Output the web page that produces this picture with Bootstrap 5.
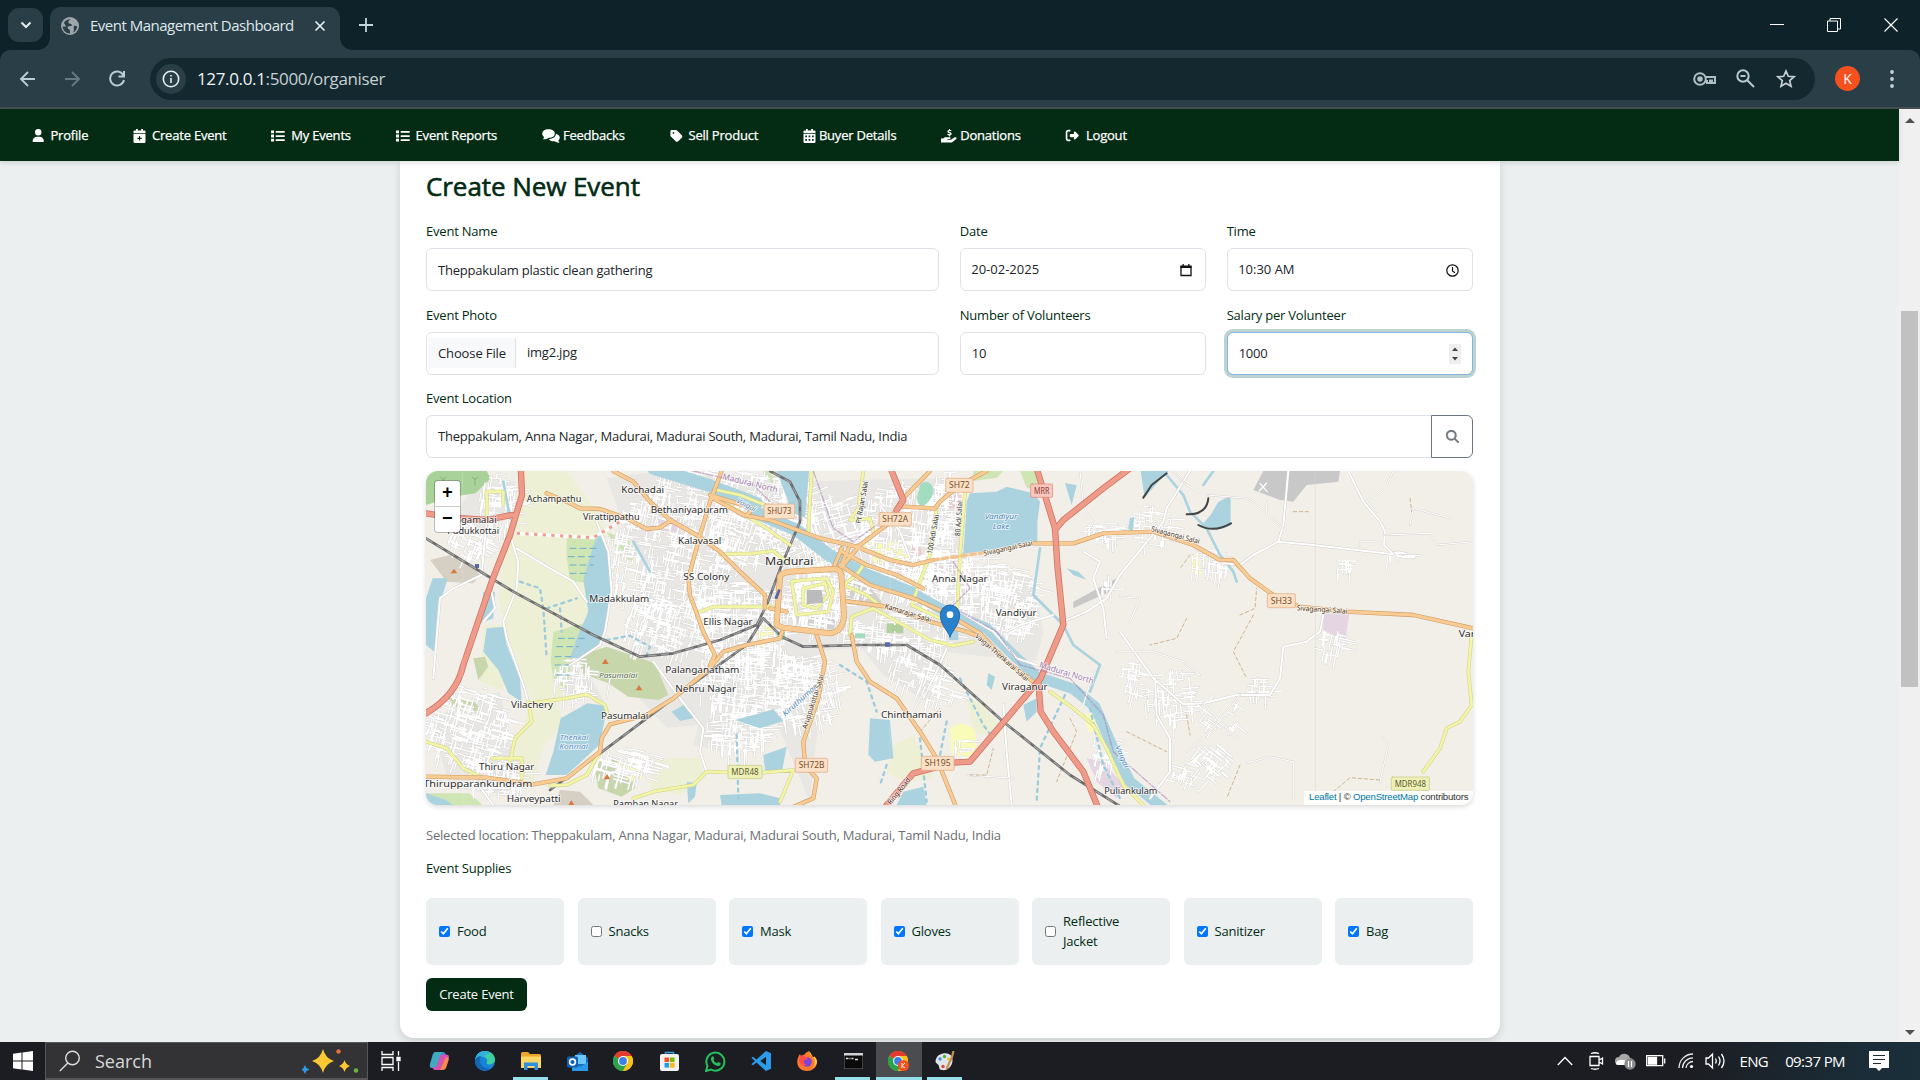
<!DOCTYPE html>
<html lang="en">
<head>
<meta charset="utf-8">
<title>Event Management Dashboard</title>
<link href="https://cdn.jsdelivr.net/npm/bootstrap@5.3.0/dist/css/bootstrap.min.css" rel="stylesheet">
<style>
body{width:1920px;height:1080px;overflow:hidden;font-family:"Open Sans","Noto Sans",sans-serif;font-size:13px;letter-spacing:-.21px;color:#022b14;background:#ebeff0}
svg{display:block;flex:none}
/* browser chrome */
.tabstrip{height:50px;background:#0d2329;padding-left:8px}
.tab-menu{width:35px;height:34px;margin-top:8px;border-radius:11px;background:#293e46}
.page-tab{width:290px;height:43px;margin:7px 0 0 7px;border-radius:11px 11px 0 0;background:#293e46;padding:0 14px 6px 11px;color:#dfe8ec;position:relative}
.page-tab::before,.page-tab::after{content:"";position:absolute;bottom:0;width:12px;height:12px}
.page-tab::before{left:-12px;background:radial-gradient(circle at 0 0,transparent 11.5px,#293e46 12px)}
.page-tab::after{right:-12px;background:radial-gradient(circle at 100% 0,transparent 11.5px,#293e46 12px)}
.tab-title{font-size:15px;letter-spacing:-.5px;margin-left:11px}
.win-btns{margin-right:22px;gap:43px}
.toolbar{height:59px;background:#293e46;border-bottom:2px solid #454f50;padding-left:18px;border-radius:10px 10px 0 0}
.toolbar-wrap{background:#0d2329}
.omnibox{width:1665px;height:42px;border-radius:21px;background:#14292f;margin-left:24px;padding:0 19px 0 6px;color:#dfe7ea}
.site-info{width:30px;height:30px;border-radius:50%;background:#293e46}
.url-text{font-size:17px;letter-spacing:-.35px;margin-left:11px;padding-top:1px;color:#c6d0d4}
.url-text b{font-weight:400;color:#eef3f5}
.avatar-k{width:25px;height:25px;border-radius:50%;background:#f4511e;color:#fff;font-size:14px;margin-left:20px}
/* page */
.viewport{height:933px}
.site-nav{height:52px;background:#042c14;box-shadow:0 2px 5px rgba(0,0,0,.12);padding:1px 0 0 32px;gap:44.8px;position:relative;z-index:2}
.site-nav a{color:#fff;text-decoration:none;font-size:13px;-webkit-text-stroke:.25px #fff}
.site-nav a svg{margin-right:6px}
.site-nav a.tight svg{margin-right:3px}
.event-card{width:1100px;height:877px;background:#fff;border-radius:0 0 14px 14px;box-shadow:0 3px 8px rgba(0,0,0,.14);padding:9px 27px 0 26px;margin-left:400px}
.event-card h2{font-size:26px;line-height:32px;letter-spacing:-.07px;font-weight:400;-webkit-text-stroke:.6px #022b14;margin:0 0 20px}
.fields{--bs-gutter-x:20.5px}
.field-box{margin-bottom:14.5px}
.field-box label,.supplies-label{display:block;line-height:19px;height:19px;margin-bottom:7px}
.form-control{height:43px;font-size:13px;letter-spacing:inherit;padding:0 11px;border:1px solid #dee2e6;border-radius:6px;color:#212529;display:flex;align-items:center}
.form-control.picker{letter-spacing:0;padding:1px 13px 0 10.5px}
.form-control.salary{border-color:#86b7de;box-shadow:0 0 0 3px #bcd3d3;padding-top:1px}
.spin{width:12px;height:20px;background:#efefef}
.choose{height:30px;background:#f8f9fa;border-right:1px solid #dee2e6;margin:0 11px 0 -10px;padding:0 9px 0 10px;line-height:30px;letter-spacing:-.12px}
.find-btn{width:42px;border:1px solid #6c757d;border-radius:0 6px 6px 0;background:#fff;margin-left:-1px;z-index:1}
.map-box{width:1047px;height:334px;border-radius:12px;overflow:hidden;position:relative;box-shadow:0 2px 5px rgba(0,0,0,.15);margin-top:-2px;font-family:"Noto Sans","Open Sans",sans-serif;letter-spacing:0}
.zoom-ctl{position:absolute;left:9px;top:10px;width:25px;height:51px;border-radius:3px;background:#fff;box-shadow:0 0 0 1px rgba(0,0,0,.22);font:bold 18px/25px "Liberation Mono",monospace;text-align:center;color:#000}
.zoom-ctl div+div{border-top:1px solid #ccc}
.attrib{position:absolute;right:0;bottom:0;height:14px;width:169px;padding-left:5px;background:rgba(255,255,255,.85);font:9.6px/12px "Liberation Sans",sans-serif;letter-spacing:-.2px;color:#333;white-space:nowrap}
.attrib a{color:#0078a8;text-decoration:none}
.chosen{color:#6c6f73;line-height:19px;margin:21px 0 14px}
.supplies-label{margin-bottom:20px}
.supplies{gap:13.5px}
.supply{flex:1 1 0;height:67px;background:#ebeff0;border-radius:6px;padding:0 8px 0 13px;line-height:20px}
.supply input{width:11px;height:11px;margin:0 7px 0 0;flex:none}
.create-btn{margin-top:13.500px;width:101px;height:33px;background:#042c14;color:#fff;border:0;border-radius:6px;font-size:13px;letter-spacing:inherit;padding:0}
.scroller{width:21px;background:#f0f0f0;padding:9px 2px 7px}
.thumb{height:376px;width:17px;background:#c1c1c1;margin-top:188px}
/* taskbar */
.taskbar{height:38px;background:linear-gradient(90deg,#1c1d22 0,#1c1d22 88%,#1a2d38 97%,#1b2f3b 100%);color:#fff;position:relative;z-index:3}
.start{width:45px}
.search-box{width:323px;height:38px;background:#333335;border:1px solid #57575a;border-bottom-width:2px;padding:1px 8px 0 13px;color:#d8d8d8;font-size:18px;letter-spacing:0}
.search-box span{margin-left:14px}
.task-app{width:46px;height:38px;border-bottom:3px solid transparent;padding-top:3px}
.task-app.view{width:48px;padding-right:4px}
.task-app.running{border-image:linear-gradient(90deg,transparent 5px,#94dfe8 5px,#94dfe8 40px,transparent 40px) 0 0 3 0}
.task-app.current{background:#4b4c50;border-bottom-color:#94dfe8}
.tray{margin-left:auto;padding-right:30px;font-size:15px;letter-spacing:-.6px}
</style>
</head>
<body class="d-flex flex-column">
<svg width="0" height="0" class="position-absolute"><defs>
<symbol id="i-list" viewBox="0 0 14 12"><path d="M0 .4h3v2.8H0zM0 4.6h3v2.8H0zM0 8.8h3v2.8H0zM4.7 1h9v1.7h-9zM4.7 5.2h9v1.7h-9zM4.7 9.3h9V11h-9z" fill="#fff"/></symbol>
<symbol id="i-chrome" viewBox="0 0 20 20"><circle cx="10" cy="10" r="10" fill="#fbc116"/><path d="M10 10 1.3 5A10 10 0 0 1 18.7 5z" fill="#e33b2e"/><path d="M10 10 1.3 5A10 10 0 0 0 10 20l4.3-7.5z" fill="#2ba24c"/><path d="M10 5h8.7a10 10 0 0 1-8.7 15l4.3-7.5z" fill="#fbc116"/><circle cx="10" cy="10" r="5" fill="#fff"/><circle cx="10" cy="10" r="3.9" fill="#3f7ee8"/></symbol>
</defs></svg>

<header>
 <div class="tabstrip d-flex">
  <div class="tab-menu d-flex align-items-center justify-content-center"><svg width="12" height="8" fill="none" stroke="#e6eef0" stroke-width="2"><path d="m1.5 1.5 4.5 4.5 4.5-4.5"/></svg></div>
  <div class="page-tab d-flex align-items-center">
   <svg width="18" height="18" viewBox="0 0 18 18"><circle cx="9" cy="9" r="9" fill="#9da6ac"/><path d="M10 2.2C8 3 6.500 4.500 8 6.500c1.500.5 3 0 3 2-1.500 1-4 .2-4.500 2 .2 2 2.500 1.500 2.500 3.500v2.500C5 16.500 2 13.500 1.600 9.500l3.500.3L4 7.500 2.800 6C4 3.500 7 1.800 10 2.200zM13 8.500c1.500 0 2.500 1 3.300 1-.3 3-2 5.200-4.600 6.300.8-1.600 1.800-2.300 1-4z" fill="#293e46"/></svg>
   <span class="tab-title">Event Management Dashboard</span>
   <svg class="ms-auto" width="12" height="12" stroke="#e6eef0" stroke-width="1.700"><path d="m1.500 1.500 9 9m0-9-9 9"/></svg>
  </div>
  <svg style="margin:18px 0 0 19px" width="14" height="14" stroke="#c5d6dc" stroke-width="1.800"><path d="M7 0v14M0 7h14"/></svg>
  <div class="win-btns d-flex ms-auto align-items-center">
   <svg width="14" height="14" stroke="#fff"><path d="M0 6.500h14"/></svg>
   <svg width="14" height="14" stroke="#fff" fill="none"><path d="M.5 3h10v10.500H.5zM3 3V.5h10.500V11H11"/></svg>
   <svg width="14" height="14" stroke="#fff" stroke-width="1.200"><path d="m.5.5 13 13m0-13-13 13"/></svg>
  </div>
 </div>
 <div class="toolbar-wrap"><div class="toolbar d-flex align-items-center">
  <svg width="19" height="18" fill="none" stroke="#b6cdd5" stroke-width="1.900"><path d="M17 9H3m7-7L3 9l7 7"/></svg>
  <svg style="margin-left:26px" width="19" height="18" fill="none" stroke="#657a81" stroke-width="1.900"><path d="M2 9h14M9 2l7 7-7 7"/></svg>
  <svg style="margin-left:26px" width="18" height="18" fill="none" stroke="#b6cdd5" stroke-width="2"><path d="M15.500 5.500A7 7 0 1 0 16 10M16 1v5.500h-5.500"/></svg>
  <div class="omnibox d-flex align-items-center">
   <div class="site-info d-flex align-items-center justify-content-center"><svg width="18" height="18" fill="none" stroke="#e6eef0" stroke-width="1.600"><circle cx="9" cy="9" r="7.700"/><path d="M9 8v5M9 5v1.600"/></svg></div>
   <span class="url-text"><b>127.0.0.1</b>:5000/organiser</span>
   <svg class="ms-auto" width="24" height="16" fill="none" stroke="#aebec4" stroke-width="2"><circle cx="7" cy="8" r="5.800"/><circle cx="7" cy="8" r="1.800" fill="#aebec4"/><path d="M12.500 6H22v6h-3V9.500h-2V12h-3V10h-1.500"/></svg>
   <svg style="margin-left:19px" width="19" height="19" fill="none" stroke="#b9c8cd" stroke-width="2"><circle cx="7" cy="7" r="5.700"/><path d="m11 11 7 7M4.500 7h5"/></svg>
   <svg style="margin-left:21px" width="20" height="19" fill="none" stroke="#c4d0d4" stroke-width="1.700"><path d="m10 2 2.300 5.300 5.700.5-4.300 3.800 1.300 5.600-5-3-5 3 1.300-5.600L2 7.800l5.700-.5z"/></svg>
  </div>
  <div class="avatar-k d-flex align-items-center justify-content-center">K</div>
  <svg style="margin-left:30px" width="4" height="18" fill="#c4d0d4"><circle cx="2" cy="2" r="1.900"/><circle cx="2" cy="9" r="1.900"/><circle cx="2" cy="16" r="1.900"/></svg>
 </div></div>
</header>

<div class="viewport d-flex">
 <main class="flex-grow-1">
  <nav class="site-nav d-flex align-items-center">
   <a class="d-flex align-items-center" href="#"><svg width="12.500" height="13" viewBox="0 0 448 512"><path fill="#fff" d="M224 256A128 128 0 1 0 224 0a128 128 0 1 0 0 256zm-45.700 48C79.800 304 0 383.800 0 482.300C0 498.700 13.300 512 29.700 512l388.600 0c16.400 0 29.700-13.300 29.700-29.700C448 383.800 368.200 304 269.700 304l-91.400 0z"/></svg><span>Profile</span></a>
   <a class="d-flex align-items-center" href="#"><svg width="13" height="14" viewBox="0 0 13 14"><path fill="#fff" fill-rule="evenodd" d="M3 0h1.800v1.500h3.400V0H10v1.500h1.500a1 1 0 0 1 1 1V4H.5V2.500a1 1 0 0 1 1-1H3zM.5 4.800h12v8a1.200 1.200 0 0 1-1.200 1.200H1.700A1.200 1.200 0 0 1 .5 12.800zM6 7v1.700H4.300v1.200H6v1.700h1.100V9.900h1.700V8.700H7.100V7z"/></svg><span>Create Event</span></a>
   <a class="d-flex align-items-center" href="#"><svg width="14" height="12"><use href="#i-list"/></svg><span>My Events</span></a>
   <a class="d-flex align-items-center" href="#"><svg width="14" height="12"><use href="#i-list"/></svg><span>Event Reports</span></a>
   <a class="tight d-flex align-items-center" href="#"><svg width="18" height="14" viewBox="0 0 18 14" fill="#fff"><path d="M12.800 4.300c0 3-2.300 4.500-6 4.500C5 9.900 3 10.500.8 10.300c.8-.6 1.200-1.300 1.200-2.300C-1.800 4.500.8.200 6.400.2c4 0 6.400 2 6.400 4.100z"/><path d="M13.900 4.800c4 1.200 5 4.200 2.600 6.400 0 1 .5 1.900 1.200 2.500-2 .2-3.600-.3-4.900-1.400-3 .3-5-.7-6-2.400 4.300.1 7-1.900 7.100-5.100z"/></svg><span>Feedbacks</span></a>
   <a class="d-flex align-items-center" href="#"><svg width="13" height="14" viewBox="0 0 448 512"><path fill="#fff" d="M0 80L0 229.500c0 17 6.700 33.300 18.700 45.300l176 176c25 25 65.500 25 90.500 0L418.700 317.300c25-25 25-65.500 0-90.500l-176-176c-12-12-28.300-18.700-45.300-18.700L48 32C21.500 32 0 53.500 0 80zm112 32a32 32 0 1 1 0 64 32 32 0 1 1 0-64z"/></svg><span>Sell Product</span></a>
   <a class="tight d-flex align-items-center" href="#"><svg width="13" height="14" viewBox="0 0 13 14"><path fill="#fff" fill-rule="evenodd" d="M3 0h1.800v1.500h3.400V0H10v1.500h1.500a1 1 0 0 1 1 1V4H.5V2.500a1 1 0 0 1 1-1H3zM.5 4.800h12v8a1.200 1.200 0 0 1-1.200 1.200H1.700A1.200 1.200 0 0 1 .5 12.800zM2.300 6.500v1.700H4V6.500zm3.300 0v1.700h1.700V6.500zm3.400 0v1.700h1.700V6.500zM2.300 10v1.700H4V10zm3.300 0v1.700h1.700V10zM9 10v1.700h1.700V10z"/></svg><span>Buyer Details</span></a>
   <a class="tight d-flex align-items-center" href="#"><svg width="16" height="14" viewBox="0 0 16 14" fill="#fff"><path d="M0 9.500h2.200l1.500-1.200h5c1.300 0 1.300 1.700 0 1.700H6.500v.7H10l3.600-2.400c1.500-.5 2.500.8 1.700 1.700L11.500 13c-.6.500-1 .6-1.700.6H0z"/><path d="M8 0h1v.9l1.300.2v1.200c-1.500-.4-2.500-.3-2.500.1 0 .7 2.900.3 2.900 2.400 0 .9-.7 1.500-1.700 1.600v1H8v-1l-1.600-.3V4.800c1.600.6 2.800.5 2.800 0 0-.7-2.800-.4-2.800-2.300C6.400 1.700 7 1.100 8 .9z"/></svg><span>Donations</span></a>
   <a class="d-flex align-items-center" href="#"><svg width="14.500" height="13" viewBox="0 0 512 512"><path fill="#fff" d="M377.900 105.900L500.700 228.700c7.200 7.200 11.300 17.100 11.300 27.300s-4.100 20.100-11.300 27.300L377.900 406.100c-6.400 6.400-15 9.900-24 9.900c-18.700 0-33.900-15.200-33.900-33.900l0-62.100-128 0c-17.700 0-32-14.300-32-32l0-64c0-17.700 14.300-32 32-32l128 0 0-62.100c0-18.700 15.200-33.900 33.900-33.900c9 0 17.600 3.600 24 9.900zM160 96L96 96c-17.700 0-32 14.300-32 32l0 256c0 17.700 14.300 32 32 32l64 0c17.700 0 32 14.300 32 32s-14.300 32-32 32l-64 0c-53 0-96-43-96-96L0 128C0 75 43 32 96 32l64 0c17.700 0 32 14.300 32 32s-14.300 32-32 32z"/></svg><span>Logout</span></a>
  </nav>
  <section class="event-card">
   <h2>Create New Event</h2>
   <div class="row fields">
    <div class="col-6 field-box"><label>Event Name</label><input class="form-control" value="Theppakulam plastic clean gathering"></div>
    <div class="col-3 field-box"><label>Date</label><div class="form-control picker"><span>20-02-2025</span><svg class="ms-auto" width="12" height="13"><path d="M1 3h10v8.500H1z" fill="none" stroke="#111" stroke-width="1.300"/><path d="M.4 1.500h11.200V4H.4zM2.500 0h1.300v2H2.500zM8.200 0h1.300v2H8.200z" fill="#111"/></svg></div></div>
    <div class="col-3 field-box"><label>Time</label><div class="form-control picker"><span>10:30 AM</span><svg class="ms-auto" width="13" height="13" fill="none" stroke="#111" stroke-width="1.200"><circle cx="6.500" cy="6.500" r="5.700"/><path d="M6.500 3v4l2.500 1.800"/></svg></div></div>
    <div class="col-6 field-box"><label>Event Photo</label><div class="form-control"><span class="choose">Choose File</span><span>img2.jpg</span></div></div>
    <div class="col-3 field-box"><label>Number of Volunteers</label><input class="form-control" value="10"></div>
    <div class="col-3 field-box"><label>Salary per Volunteer</label><div class="form-control salary">1000<div class="spin ms-auto"><svg width="12" height="20" fill="#444"><path d="m3 7 3-3.500L9 7zM3 13l3 3.500L9 13z"/></svg></div></div></div>
    <div class="col-12 field-box"><label>Event Location</label><div class="input-group flex-nowrap"><div class="form-control rounded-end-0">Theppakulam, Anna Nagar, Madurai, Madurai South, Madurai, Tamil Nadu, India</div><button class="find-btn d-flex align-items-center justify-content-center p-0"><svg width="13" height="13" viewBox="0 0 512 512"><path fill="#6c757d" stroke="#6c757d" stroke-width="14" d="M416 208c0 45.900-14.900 88.300-40 122.700L502.600 457.400c12.500 12.500 12.500 32.800 0 45.300s-32.800 12.500-45.300 0L330.700 376c-34.400 25.200-76.800 40-122.700 40C93.100 416 0 322.900 0 208S93.100 0 208 0S416 93.100 416 208zM208 352a144 144 0 1 0 0-288 144 144 0 1 0 0 288z"/></svg></button></div></div>
   </div>
   <div class="map-box">
    <svg width="1047" height="334" viewBox="18 18 3141 1002" fill="none" stroke-linejoin="round" stroke-linecap="round">
     <rect x="18" y="18" width="3141" height="1002" fill="#f2efe9"/>
     <!-- farmland, woods, built-up land -->
     <g fill="#eef0d5"><path d="M315 18h125l110 150 20 170-30 200-60 60-40 100-100 15-60-130-45-180 20-190zM1420 840l60-30 60 130-90 10-50-30zM1640 700l40 10 70 80-20 30-70-20zM700 880l140 0 10 60-70 50-90-20zM330 720l80-10 20 60-60 80-30 100-70 20 10-120zM190 480l70 0-10 200-70-30z"/></g>
     <g fill="#e9e7e4"><path d="M560 40 720 18l480 30 400-10 60 380 150 30 40 140-220-20-180-30-250 20-60 160-180 120-100-60-120 10-140-150 70-190-20-160zM880 600l240-30 80 150-30 290-110-260-90-40-60 150-90-20zM30 760l210-80 50 240-10 70-190-20zM180 40l110 10-70 170-110-80zM440 590l80 60 60 110-90-80-60 10zM1300 520l260 30 20 90-60 70-130-80zM1660 310l180 30 30 160-20 80-100-80-130-50z"/></g>
     <path d="M18 18h182l12 22-45 45-70 10-79 25z" fill="#a9d29b"/>
     <g fill="#cfe6b4"><path d="M440 220h100l10 20-20 50-25 65-55-8-10-70zM400 500l110-30-50 100-20 100-38-20-10-60zM560 200l70 30 10 60-40-20zM1070 18h-40l40 60zM1660 18h90l-20 20-70 10zM1800 18h50l10 60-40-10zM18 985l130 0 40 35H18z"/></g>
     <g fill="#c8d7ab"><path d="m480 570 80-25 90 30 55 20 40 95-30 15-90-10-60-40-80-30zM520 890l60-10 50 30 15 60-40 25-70-25zM80 690l90 25 10 25-80-15zM160 580l35-5 10 30-30 40z"/></g>
     <g fill="#d5cfc4"><path d="m30 285 60-15 70 30 20 30-20 25-80-5zM420 975l60 5 40 40H400z"/></g>
     <g fill="#f9fbb8"><path d="M1590 790q50-30 75 10l5 50-30 40-45-25zM1990 750l30-5 10 50-25 5zM2310 280l25-20 10 70-25-5zM990 480l60-10 40 50-80 40zM1320 230l120 0 30 50-100 20zM590 890l60 10 20 40-40 10z"/></g>
     <g fill="#e5d5e3"><path d="M1480 300l120-10 15 70-120 0zM2710 445h78l-12 80-66-30zM2000 880l50 10 60 70-20 40-60-50zM700 160l70-10 10 50-50 0z"/></g>
     <path d="m1470 240 30-10 5 40-25 10zM1580 90l45 0-5 40-40 0z" fill="#f5c7c9"/>
     <path d="m2500 75 30-57h230l-5 32-95 10-40 50-40-5zM1960 410l130-70-10 35-120 55z" fill="#c9c8c8"/>
     <path d="M1290 340l60 20 40 60-110-20zM1130 440l120 20-10 35-110-20z" fill="#d3d1d0"/>
     <path id="streets" stroke="#fff" stroke-width="4.200"/>
     <path d="M1500 60q20-20 35 0t-10 50-35-10zM1070 500h25v25h-25zM1305 505h30v15h-30z" fill="#a3dcc0"/><path d="M1400 475h20l4 8 6-8h20v30h-20l-6-8-4 8h-20z" fill="#b0cf9d"/>
     <!-- water -->
     <g fill="#aad3df"><path d="m1640 110 10-25 80-5 30-15 80 20 20 25-8 60 0 62-222 35zM490 345l30-105 20-40 30 70 5 70-15 140-25 60-55 40-30 0 20-60 35-80zM190 560l10-70 50-5 10 55 40 100 5 70-40-25-30-70zM400 860l22-100 80-45 60 8-22 115-100 92-63 0zM18 400l20-60 45 0-30 100-10 120-25-20zM190 380h35l-5 80-40 15zM755 740l40-22 30 40-45 10zM945 765l115-32 30 35-70 22zM1350 760l60 5 10 115-55 10-20-20zM900 990l120-5 60 15v20H905zM1030 870l70-25-15 80-50-10zM1070 18h97l-12 140-38-15zM1450 980l60-15 10 55h-90zM18 985l60 20 20 15H18z"/></g>
     <path fill="#aad3df" d="M2162 18H2245L2215 50 2174 98ZM2395 110 2432 92V182L2390 196 2342 184 2372 150ZM1935 55 1970 60 1955 120ZM1705 625 1725 635 1715 675 1700 660ZM1585 495H1615V525H1587ZM1810 720 1850 700V740L1820 770ZM800 950 830 955 825 995 805 1015ZM1940 310 1975 320 2000 345 1960 330ZM2130 160 2142 155 2138 205 2125 190Z"/>
     <g stroke="#aad3df"><path stroke-width="38" d="M700 10 870 62 1010 115M1000 140 1130 195 1230 272 1340 330 1480 385"/><path stroke-width="32" d="M1480 385 1560 430 1700 490 1780 570 1850 635 1960 672 2025 725 2080 850 2130 950 2230 1030"/><path stroke-width="8" d="M2240 30 2290 90 2310 140 2360 190 2400 270 2440 320 2450 350M1860 250 1840 390 1900 450 1930 480 1960 540 2040 600 2010 680M250 50 270 160M640 230 690 320M2350 60 2380 18"/></g>
     <g stroke="#9ccbdc" stroke-width="7" stroke-dasharray="9 14"><path d="M300 350 360 370 370 430 380 580M420 430 425 500M380 430 470 400M560 525 630 512 690 545 680 570M950 810 955 1000M1260 600 1340 650 1370 740M1620 640 1690 780 1720 820M1580 770 1560 870M1935 690 1860 850 1850 1010M2010 730 2050 900 2100 1000M1500 820 1520 1010M1400 900 1380 960"/></g>
     <g stroke="#6aaecb" stroke-width="3" stroke-dasharray="18 12"><path d="M450 250h90M445 275h85M450 300h70M450 325h55M415 520h80M410 545h65M405 575h50M405 600h45M408 630h40"/></g>
     <!-- local roads -->
     <g id="lanes"><path d="M270 210 295 290 290 370 250 470 260 520 310 660 325 710M200 165 185 330 100 370 60 400 40 640M210 360 225 430 190 470M290 250 390 310 460 350 500 410M530 170 565 260 575 380 555 500 540 540 450 600M130 900 220 1020M1750 720 1760 860 1775 1020M2310 18 2240 130 2230 170 2100 330M2605 18 2590 180 2575 230 2500 270 2460 300M2575 230 2680 240 2920 268M2785 18 2830 110 2880 170 2895 200 2892 240 2920 268M2460 300 2380 290M2710 450 2700 500 2660 530 2590 545 2580 640 2550 690 2450 690 2350 715 2290 718 2200 640 2100 500M2205 640 2210 750 2250 820 2250 920 2190 1000M1990 260 2040 290 2020 340 2050 430 2060 520M1930 470 2000 440 2060 400 2100 330M1620 440 1720 500 1790 580 1850 600M1580 550 1550 620 1510 700M700 590 780 700 850 790 840 860 860 920M1900 450 1800 480 1760 500M1380 120 1440 200 1470 280"/></g>
     <g id="paths"><path d="M2460 690 2380 790 2300 860M2480 895 2550 875 2620 890 2620 1000M2090 560 2200 560 2290 590 2340 630M2260 18 2300 60 2360 90 2480 100 2540 140M2540 110 2540 150 2590 190M2870 140 2840 110 2900 60 2920 18M2970 180 2980 130 3090 160M2895 210 3030 205 3050 240 3159 230M2350 715 2450 820M2130 470 2160 400 2100 395M570 640 560 700M2890 820 2905 840 2880 950M2820 245V230H2880M1980 18 1990 120 2030 200M1470 760 1500 700 1560 640M1640 930 1780 940M2020 620 1990 720 1960 750"/></g>
     <path d="M2500 450 2440 560 2480 640M2300 460 2270 520 2190 540M2310 270 2280 310M2460 450 2505 430 2510 370M2120 800 2240 860M2460 900 2420 1000M2740 980 2790 938 2880 945M1650 930 1700 930 1720 850M1950 760 1970 800 1910 950M2300 750 2310 810M1500 800 1560 730M2970 100 2975 140M2620 140h45" stroke="#cdb48d" stroke-width="3" stroke-dasharray="10 8"/>
     <!-- rail -->
     <g id="rail"><path d="M18 220 280 380 520 510 660 575 760 565 900 525 1010 480 1040 420 1085 300 1140 170 1140 110 1110 50 1050 18M1030 460 980 540 800 670 540 865 390 975M1030 460 1085 515 1150 545 1320 540 1460 540 1560 600 1750 770 1950 930 2110 1030"/></g>
     <!-- classified roads: yellow, orange, red -->
     <g id="yellow"><path d="M890 75 960 90 1060 130M870 90 960 140 1040 190 1110 240M900 268 1000 265 1060 258 1100 290M840 440 880 425 1060 425M1175 18 1165 200M1330 18 1315 130 1290 165 1350 160 1360 200M1550 130 1530 270 1500 350 1475 420 1560 460M1635 80 1620 270 1612 430M1290 510 1295 455 1360 430 1450 480 1530 525 1600 542 1660 530M330 715 440 700 500 688 555 720 565 760M325 710 335 770 285 820 270 890M215 880H305V940M18 830 80 850 130 910 190 940M1890 680 1960 730 2020 780 2060 850 2110 960 2170 1020M640 1000 700 980 820 960 860 920 1000 925 1120 915 1080 1010M3155 510 3145 620 3155 720 3120 770 3080 790 3060 850 3010 920M1115 350 1150 345 1220 340 1240 380 1225 440 1130 450 1115 350M1150 370 1215 355 1225 390 1190 430 1150 420ZM1270 360 1310 330 1330 300M1270 360 1340 390 1390 430M200 150V80H250V120M540 860 500 930 440 960 390 962"/></g>
     <g id="orange"><path d="M580 18 640 50 690 110 750 165 830 210 900 260 960 320 1035 390 1035 430M380 85 440 110 480 130 540 132 620 160 680 192 720 188 755 165M905 18 870 110 840 210 805 340 810 390 850 500 885 570 870 600M870 90 1000 130 980 150M880 100 970 150 1050 165 1200 220 1310 245 1410 285 1480 300 1540 285M1840 235 1960 235 2050 205 2200 200 2320 240 2400 285 2440 285 2490 340 2560 390 2640 425 2780 440 2980 450 3160 490M1700 18 1620 60 1560 110 1545 130 1450 125M1530 18 1450 100 1400 180 1320 240 1270 300M1265 260 1340 300 1430 330 1510 370M1260 300 1350 360 1480 400 1570 440 1680 505 1760 590 1840 650M1275 408 1400 425 1530 470 1640 500 1690 520M1050 430 1100 440M1090 490 1080 520 980 540 910 560 870 610 760 700 680 750 570 778 545 820 540 860 440 940 340 958 200 938 18 935M1190 510 1215 590 1195 700 1150 830 1155 900 1190 940 1180 1000 1110 1030M1295 510 1310 590 1350 650 1430 700 1500 800 1550 880 1610 1030M1260 310 1290 240M1240 310 1265 250"/></g>
     <path d="M1540 285 1700 262 1840 235" stroke="#f3c38b" stroke-width="10" stroke-dasharray="16 12"/>
     <path d="M1080 335Q1085 322 1110 320L1240 312Q1262 312 1264 330L1272 450Q1270 500 1230 505L1090 488 1070 480Z" stroke="#d9a467" stroke-width="18"/><path d="M1080 335Q1085 322 1110 320L1240 312Q1262 312 1264 330L1272 450Q1270 500 1230 505L1090 488 1070 480Z" stroke="#f8cb95" stroke-width="14"/>
     <path d="M290 205 520 218 600 170" stroke="#fff" stroke-width="10"/><path d="M290 205 520 218 600 170" stroke="#ef9f8d" stroke-width="9" stroke-dasharray="10 16" stroke-linecap="butt"/>
     <g id="red"><path d="M302 0 306 90 270 210 215 350 130 600Q110 690 18 745M18 145 100 158 200 165 275 150M1850 10 1905 190 1912 300 1930 480 1862 640 1650 890 1600 893 1480 925 1400 1020M1905 195 1930 165 2050 70 2130 10M1855 650 1862 740 1900 800 1990 920 2035 1030M1415 18 1450 105 1430 135"/></g>
     <path d="M2240 25 2195 60 2170 98M2365 100Q2360 150 2300 148M2335 180Q2380 205 2433 175" stroke="#444" stroke-width="6"/>
     <path d="M820 18 1000 60 1050 110M1180 18 1240 190 1300 230 1370 180M1600 290 1650 370 1600 420M1620 440 1730 500 1800 600 1950 640 2050 750 2080 860 2250 1010" stroke="#a87bb0" stroke-opacity=".55" stroke-width="4" stroke-dasharray="22 6 5 6"/>
     <path d="M1160 375h45l5 38-50 5z" fill="#bbb"/><path d="M1395 532h16v13h-16zM1063 400l12-28 7 3-10 28zM165 297h12v12h-12z" fill="#5966a8"/>
     <g fill="#d9783f"><path d="m92 325 10-14 10 14zM546 597l10-16 10 16zM647 676l10-16 10 16zM551 943l10-16 10 16zM445 1020l9-14 9 14z"/></g>
     <path d="m2518 78 22-24m-20 2 22 24" stroke="#fff" stroke-width="4"/>
     <path d="M70 60v-16m-8-8q8 14 16 0M165 60v-16m-8-8q8 14 16 0" stroke="#7fb374" stroke-width="3"/>
     <path d="M128 18V1020M1410 18V1020" stroke="#fff" stroke-opacity=".25" stroke-width="2"/><path d="M2686 18V1020" stroke="#d9d5cd" stroke-width="1.500"/>
     <g id="labels" font-family="'Noto Sans','Open Sans',sans-serif"></g>
     <!-- marker -->
     <path d="M1590 516C1583 494 1561 482 1561 449a29 29 0 0 1 58 0C1619 482 1597 494 1590 516Z" fill="#2a81cb" stroke="#1d6ab0" stroke-width="3"/><circle cx="1590" cy="449" r="10" fill="#fff"/>
    </svg>
    <div class="zoom-ctl"><div>+</div><div>−</div></div>
    <div class="attrib"><a href="#">Leaflet</a> | © <a href="#">OpenStreetMap</a> contributors</div>
   </div>
   <p class="chosen">Selected location: Theppakulam, Anna Nagar, Madurai, Madurai South, Madurai, Tamil Nadu, India</p>
   <div class="supplies-label">Event Supplies</div>
   <div class="supplies d-flex">
    <label class="supply d-flex align-items-center"><input type="checkbox" checked><span>Food</span></label>
    <label class="supply d-flex align-items-center"><input type="checkbox"><span>Snacks</span></label>
    <label class="supply d-flex align-items-center"><input type="checkbox" checked><span>Mask</span></label>
    <label class="supply d-flex align-items-center"><input type="checkbox" checked><span>Gloves</span></label>
    <label class="supply d-flex align-items-center"><input type="checkbox"><span>Reflective<br>Jacket</span></label>
    <label class="supply d-flex align-items-center"><input type="checkbox" checked><span>Sanitizer</span></label>
    <label class="supply d-flex align-items-center"><input type="checkbox" checked><span>Bag</span></label>
   </div>
   <button class="create-btn">Create Event</button>
  </section>
 </main>
 <aside class="scroller d-flex flex-column align-items-center">
  <svg width="10" height="5"><path d="m0 5 5-5 5 5z" fill="#505050"/></svg>
  <div class="thumb"></div>
  <svg class="mt-auto" width="10" height="5"><path d="m0 0 5 5 5-5z" fill="#505050"/></svg>
 </aside>
</div>

<footer class="taskbar d-flex align-items-center">
 <div class="start d-flex justify-content-center"><svg width="20" height="20" fill="#fff"><path d="M0 2.800 8.500 1.600v7.900H0zM9.500 1.500 20 0v9.500H9.500zM0 10.500h8.500v7.900L0 17.200zM9.500 10.500H20V20L9.500 18.500z"/></svg></div>
 <div class="search-box d-flex align-items-center">
  <svg width="22" height="22" fill="none" stroke="#ddd" stroke-width="1.400"><circle cx="13.500" cy="8" r="6.800"/><path d="m8.800 13-8 8"/></svg>
  <span>Search</span>
  <svg class="ms-auto" width="58" height="26" viewBox="0 0 58 26"><path d="M22 1q2.500 9.500 11 12-8.500 2.500-11 12-2.500-9.500-11-12 8.500-2.500 11-12z" fill="#fcc934"/><path d="M43.500 12q1.200 4.500 5.500 6-4.300 1.500-5.500 6-1.200-4.500-5.500-6 4.300-1.500 5.500-6z" fill="#fcc934"/><path d="m4 17 1.500 3 3 1.500-3 1.500L4 26l-1.500-3-2-1 2-2z" fill="#2b9be8"/><circle cx="37.500" cy="3.500" r="2.200" fill="#e8703a"/><circle cx="55" cy="22.500" r="2.300" fill="#6bb13f"/></svg>
 </div>
 <div class="task-app view d-flex align-items-center justify-content-center"><svg width="21" height="20" fill="none" stroke="#fff" stroke-width="1.300"><path d="M2 0v3.500h11V0M2 6.500h11v7H2zM2 20v-3.500h11V20M18.500 0v4.500M18.500 11v9"/><path d="M17 6.500h3v3h-3z" fill="#fff"/></svg></div>
 <div class="task-app d-flex align-items-center justify-content-center"><svg width="20" height="18"><path d="M7 0h7q2 0 2.500 2l.5 2h-5L9 14q-.7 2-2.700 2H3q-3 0-2-4l2.500-9Q4.500 0 7 0z" fill="#2f8de4"/><path d="M5 0h8l-4 13-3 4Q0 16 1 12z" fill="#4fc3a1" opacity=".55"/><path d="M13 18H6q-2 0-2.500-3h4L11 4q.7-1.500 2.500-1.500H17q4 0 2.500 4.500l-2.500 8q-1 3-4 3z" fill="#d750b2"/><path d="M17 5q4 0 2 5l-2 6q-1 2-4 2h-2z" fill="#f58a4b"/></svg></div>
 <div class="task-app d-flex align-items-center justify-content-center"><svg width="20" height="20"><circle cx="10" cy="10" r="10" fill="#1683d8"/><path d="M0 9C1 3 5 0 10 0c6 0 10 4 10 8.500 0 3.500-3 5-6 5-2 0-3-1-2-2.500C13 8 10 5.500 6.500 5.500 3.500 5.500 1 7 0 9z" fill="#3fcfa0"/><path d="M0 9C1 3 5 0 10 0q4 0 6 2-6 0-6 5Q8 5.500 6.500 5.500 2 5.500 0 9z" fill="#2fb0dc"/><path d="M0 10c0-3 3-5 6.500-4.800C3 8 5 18 15 17.500 10 22 0 19 0 10z" fill="#1565b5"/></svg></div>
 <div class="task-app running d-flex align-items-center justify-content-center"><svg width="20" height="18"><path d="M0 1.500Q0 0 1.500 0H7l2 2h9.500Q20 2 20 3.500V16H0z" fill="#e9a82a"/><path d="M0 4.500h20V16H0z" fill="#fcd667"/><path d="M3 18v-7.500h14V18h-3.500v-4h-7v4z" fill="#2f8fe0"/></svg></div>
 <div class="task-app d-flex align-items-center justify-content-center"><svg width="21" height="19"><path d="m5 6 8-6 8 6v12H5z" fill="#1a6fc4"/><path d="M8 3h11v9H8z" fill="#6cc7f6"/><path d="m5 10 8 5 8-5v9H5z" fill="#2a9ae8"/><rect y="4.500" width="11" height="11" rx="1.500" fill="#0f62b4"/><circle cx="5.500" cy="10" r="2.900" fill="none" stroke="#fff" stroke-width="1.600"/></svg></div>
 <div class="task-app d-flex align-items-center justify-content-center"><svg width="20" height="20"><use href="#i-chrome"/></svg></div>
 <div class="task-app d-flex align-items-center justify-content-center"><svg width="19" height="20"><path d="M5.500 4V1.500h8V4" fill="none" stroke="#3aa3e0" stroke-width="1.500"/><rect y="3" width="19" height="17" rx="2" fill="#f2f2f2"/><path d="M4.500 6.500h4.600v4.600H4.500z" fill="#f05024"/><path d="M10 6.500h4.600v4.600H10z" fill="#7fba00"/><path d="M4.500 12h4.600v4.600H4.500z" fill="#1aa0e8"/><path d="M10 12h4.600v4.600H10z" fill="#fdb813"/></svg></div>
 <div class="task-app d-flex align-items-center justify-content-center"><svg width="21" height="21" viewBox="0 0 21 21"><path d="M1 20l1.500-5A9 9 0 1 1 6 18.500z" fill="none" stroke="#25c05e" stroke-width="2"/><path d="M7 5.500q1.200-.6 1.700.7l.6 1.500-.8 1.300q1.200 2.200 3.500 3.200l1.200-1.200 2.200 1q.6.400.1 1.400-1 2-3.500 1.400Q7.500 13.500 6 9 5.600 6.500 7 5.500z" fill="#25c05e"/></svg></div>
 <div class="task-app d-flex align-items-center justify-content-center"><svg width="20" height="20"><path d="m15 0 5 2.300v15.400L15 20 5.500 11.500 2 14.300.3 13.300 4 10 .3 6.700 2 5.700l3.500 2.800zM15 5.800 9.200 10 15 14.200z" fill="#2a9bea" fill-rule="evenodd"/></svg></div>
 <div class="task-app d-flex align-items-center justify-content-center"><svg width="20" height="20"><path d="M10 20C4 20 0 16 .3 10.500.4 7 2 4.500 3 3l1 2.500q2-2 3.500-2Q8.500 1 12 0q0 2.500 2.500 4Q16 5 16 6.500l1.500-1Q20 8.500 20 11.500C19.500 17 15 20 10 20z" fill="#ff7a2b"/><path d="M12 0q0 3 3 5t3 7-6 6q6-1 8-6.500 0-4-2.500-6L16 6.500Q14 1.500 12 0z" fill="#ffd23c"/><circle cx="10" cy="11" r="4.800" fill="#7a45d8"/><path d="M3 5q3-2 6 1l2 2-4 1.500q-1 3 3 4.500-7 2-8-5z" fill="#ff4c4c"/></svg></div>
 <div class="task-app running d-flex align-items-center justify-content-center"><svg width="19" height="16"><path d="M0 0h19v16H0z" fill="#0a0a0a" stroke="#777"/><path d="M0 0h19v2.500H0z" fill="#cfd3d6"/><path d="M2 5.500h2.500M5.500 5.500h1M7.500 5.500h2M11 6.500h3" stroke="#ddd" stroke-width="1.400"/></svg></div>
 <div class="task-app current d-flex align-items-center justify-content-center"><svg width="22" height="20"><use href="#i-chrome" width="20" height="20"/><circle cx="15.500" cy="14.500" r="5.500" fill="#f4511e"/><path d="M14 12v5M17 12l-3 2.700L17 17" stroke="#fff" fill="none" stroke-width=".9"/></svg></div>
 <div class="task-app running d-flex align-items-center justify-content-center"><svg width="20" height="20"><path d="M8 2.500c6-1 10 2 9.500 7.500-.4 5.500-5 10-10.500 9C3 18.500 5 15 3 13.500.5 12 0 10.500 1 8 2 5 4.500 3 8 2.500z" fill="#dfe5ea"/><circle cx="5" cy="8" r="1.700" fill="#3f8fe0"/><circle cx="9.500" cy="5.500" r="1.700" fill="#57ad45"/><circle cx="13.500" cy="8" r="1.500" fill="#e4c330"/><circle cx="8" cy="15.500" r="1.700" fill="#d9483b"/><path d="M18.500 0 17 6l-5.500 12" stroke="#c98d4d" stroke-width="2.200" fill="none"/></svg></div>
 <div class="tray d-flex align-items-center">
  <svg width="16" height="10" fill="none" stroke="#fff" stroke-width="1.300"><path d="m.8 9 7.200-7.500L15.200 9"/></svg>
  <svg style="margin-left:16px" width="15" height="18" fill="none" stroke="#fff" stroke-width="1.300"><path d="M1 4.500h9v9H1zM10 8l3.500-2v6L10 10M2 1.500q4-1.500 8 0M2 16.500q4 1.500 8 0"/></svg>
  <svg style="margin-left:11px" width="21" height="18"><path d="M4 13a4 4 0 0 1 0-8 6 6 0 0 1 11 1q4 1 3 5z" fill="#a8a8a8"/><path d="M1 12q0-4 5-4 4-1 9 4l-1 1H4q-3 0-3-1z" fill="#fff"/><circle cx="15" cy="12" r="5.700" fill="#8b8b8b"/><path d="M13.500 9v6M16.500 9v6" stroke="#fff" stroke-width="1.200"/></svg>
  <svg style="margin-left:10px" width="20" height="12" fill="none" stroke="#fff" stroke-width="1.300"><path d="M.7.700h16v10h-16z"/><path d="M2.500 2.500h8v6.500h-8z" fill="#fff"/><path d="M18.700 3.500v5"/></svg>
  <svg style="margin-left:12px" width="16" height="16" fill="none" stroke="#e8e8e8" stroke-width="1.300"><path d="M1 15A14 14 0 0 1 15 1M4.500 15A10.500 10.500 0 0 1 15 4.800M8 15a7 7 0 0 1 7-6.500"/><circle cx="13.500" cy="13.500" r="1.600" fill="#fff" stroke="none"/></svg>
  <svg style="margin-left:11px" width="22" height="18" fill="none" stroke="#fff" stroke-width="1.300"><path d="M1 6h2.500L7.500 2v14l-4-4H1zM10.500 6.500q1.500 2.500 0 5M13.500 4.500q3 4.500 0 9M16.500 2q5 7 0 14"/></svg>
  <span style="margin-left:12px">ENG</span>
  <span style="margin-left:17px">09:37 PM</span>
  <svg style="margin-left:24px" width="21" height="20"><path d="M0 0h20v17h-7l-3 3-3-3H0z" fill="#fff"/><path d="M4 4.500h12M4 8.500h12M4 12.500h8" stroke="#1c2a33" stroke-width="1.200"/></svg>
 </div>
</footer>

<script src="https://cdn.jsdelivr.net/npm/bootstrap@5.3.0/dist/js/bootstrap.bundle.min.js"></script>
<script>
const NS='http://www.w3.org/2000/svg';
// two-tone road styling: a darker casing under a lighter fill
function cased(id,outer,ow,inner,iw,dash){
  const g=document.getElementById(id),p=g.firstElementChild,q=p.cloneNode();
  p.setAttribute('stroke',outer);p.setAttribute('stroke-width',ow);
  q.setAttribute('stroke',inner);q.setAttribute('stroke-width',iw);
  if(dash)q.setAttribute('stroke-dasharray',dash);
  g.append(q);
}
cased('lanes','#cfccc8',8.5,'#fff',6);
cased('paths','#d3d0cc',5.5,'#fff',3.2);
cased('rail','#6d6d6d',8,'#a5a5a5',3.5,'22 16');
cased('yellow','#cfd08c',11,'#f3f5a6',8);
cased('orange','#cf9d62',13,'#f8cb95',9.5);
cased('red','#cf7061',19,'#ee9b8a',14.5);
// street grids: centre x, y, radius x, y, angle, number of segments
let seed=7;const rnd=()=>(seed=(seed*16807)%2147483647)/2147483647;
let d='';
[[750,270,190,210,.2,420],[980,180,120,120,.3,160],[1180,200,160,130,-.3,240],[1180,400,100,90,.15,190],[1450,180,140,130,.1,230],[1420,340,180,50,.3,120],[1600,350,170,100,0,260],[1770,410,90,100,.2,130],[960,480,140,130,0,260],[760,480,150,90,.3,150],[1000,640,180,110,.1,260],[1150,680,110,110,-.2,130],[950,800,100,60,0,110],[1430,500,180,60,.1,140],[1500,610,90,60,.3,70],[140,780,130,120,.3,200],[230,930,90,60,0,90],[240,110,60,90,.1,70],[150,220,60,60,.4,50],[460,640,60,60,.1,50],[620,900,100,50,.3,80],[1580,130,60,110,0,80],[900,40,200,25,.2,70],[2190,180,70,60,.1,60],[2370,290,60,40,.1,50],[2250,690,80,80,-.1,90],[2130,640,40,60,.2,40],[2370,890,55,60,.7,60],[2510,670,35,30,0,30],[2730,535,50,45,.2,35],[2280,930,50,40,.3,20],[2770,300,28,18,0,16],[2400,740,70,60,.6,25],[2040,200,60,25,0,40],[2070,360,30,30,0,12],[2050,870,40,60,.2,40],[1620,850,20,45,0,10],[1560,680,50,40,.3,20],[2930,268,30,14,0,12],[1120,110,70,80,.1,80]].forEach(([cx,cy,rx,ry,a,n])=>{
  if(cx<1850)n*=1.35;
  for(let i=0;i<n;i++){
    const t=rnd()*6.283,r=Math.sqrt(rnd()),x=cx+rx*r*Math.cos(t),y=cy+ry*r*Math.sin(t);
    const b=a+(rnd()<.5?0:1.571)+(rnd()-.5)*.12,l=12+rnd()*38;
    d+=`M${x|0} ${y|0}l${(l*Math.cos(b))|0} ${(l*Math.sin(b))|0}`;
  }
});
const st=document.getElementById('streets'),under=st.cloneNode();
under.removeAttribute('id');under.setAttribute('stroke','#d2d0ce');under.setAttribute('stroke-width','6.200');under.setAttribute('d',d);
st.before(under);st.setAttribute('d',d);
// labels: text, left x, baseline y, width, size, colour, rotation, italic
const L=document.getElementById('labels');
function label(s,x,y,w,f=29,c='#2d2d2d',rot=0,it=0){
  const t=document.createElementNS(NS,'text');
  const A={x,y,textLength:w,lengthAdjust:'spacingAndGlyphs','font-size':f,fill:c,stroke:'#fff','stroke-opacity':.75,'stroke-width':5,'paint-order':'stroke'};
  if(rot)A.transform=`rotate(${rot} ${x} ${y})`;
  if(it)A['font-style']='italic';
  for(const k in A)t.setAttribute(k,A[k]);
  t.textContent=s;L.append(t);
}
[['Achampathu',320,111,164],['Kochadai',604,84,128],['Bethaniyapuram',692,145,232],['Virattippathu',489,164,170],['Nagamalai',85,173,145],['Pudukkottai',82,208,155],['Kalavasal',774,237,130],['SS Colony',790,345,138],['Madurai',1035,299,145,33],['Madakkulam',508,411,180],['Ellis Nagar',850,479,148],['Palanganatham',736,623,222],['Nehru Nagar',766,680,182],['Pasumalai',543,761,142],['Vilachery',273,730,126],['Thiru Nagar',177,916,166],['Thirupparankundram',10,966,327],['Harveypatti',260,1012,162],['Pamban Nagar',580,1026,194],['Anna Nagar',1536,352,167],['Vandiyur',1727,452,123],['Viraganur',1746,675,137],['Chinthamani',1383,760,182],['Puliankulam',2053,988,159],['Varichiyur',3116,516,150],
['Pasumalai',537,638,115,23,'#5c6b4b',0,1],['Thenkal',419,824,86,23,'#5a8fc0',0,1],['Konmai',418,853,86,23,'#5a8fc0',0,1],['Vandiyur',1694,163,98,23,'#4f86b5',0,1],['Lake',1718,192,50,23,'#4f86b5',0,1],['Vaigai',948,112,62,22,'#5a8fc0',28,1],['Vaigai',2085,845,72,22,'#5a8fc0',66,1],['Kiruthumar',1096,755,130,23,'#4f86b5',-42,1],
['Madurai North',906,42,170,25,'#a07bab',14],['Madurai North',1856,607,170,25,'#a07bab',17],
['Pt Rajan Salai',1322,176,128,22,'#333',-80],['100 Adi Salai',1536,268,120,22,'#333',-80],['80 Adi Salai',1620,214,105,22,'#333',-86],['Sivagangai Salai',1692,272,150,21,'#4a3418',-12],['Kamarajar Salai',1393,430,145,22,'#4a3418',17],['Vaigai Thenkarai Salai',1664,515,205,21,'#4a3418',41],['Aruppukottai Salai',1160,793,170,22,'#4a3418',-72],['Ring Road',1412,1020,96,22,'#4a1f18',-51],['Sivagangai Salai',2192,198,150,22,'#4a3418',15],['Sivagangai Salai',2630,436,152,22,'#4a3418',4]
].forEach(a=>label(...a));
// road shields
[['SHU73',1032,117,92,44,'#fae0c6','#e2a878','#7a4f28'],['SH72A',1377,143,97,40,'#fae0c6','#e2a878','#7a4f28'],['SH72',1577,40,82,42,'#fae0c6','#e2a878','#7a4f28'],['MRR',1832,57,66,40,'#f8c8be','#dc8474','#8a3a30'],['SH72B',1126,880,97,42,'#fae0c6','#e2a878','#7a4f28'],['SH195',1504,874,98,42,'#fae0c6','#e2a878','#7a4f28'],['SH33',2542,386,84,42,'#fae0c6','#e2a878','#7a4f28'],['MDR48',924,901,102,40,'#eef0b8','#c5c87c','#5c5d2c'],['MDR948',2914,936,114,40,'#eef0b8','#c5c87c','#5c5d2c']].forEach(([s,x,y,w,h,f,k,c])=>{
  const r=document.createElementNS(NS,'rect');
  Object.entries({x,y,width:w,height:h,rx:4,fill:f,stroke:k,'stroke-width':2}).forEach(([a,v])=>r.setAttribute(a,v));
  L.append(r);label(s,x+10,y+h/2+9,w-20,26,c);L.lastChild.removeAttribute('stroke');
});
</script>
</body>
</html>
